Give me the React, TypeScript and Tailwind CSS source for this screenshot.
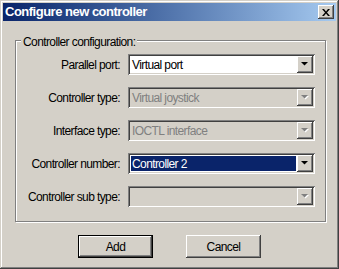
const raised =
  'shadow-[inset_-1px_-1px_#404040,inset_1px_1px_#fff,inset_-2px_-2px_#808080,inset_2px_2px_#d4d0c8]';
const sunken =
  'shadow-[inset_1px_1px_#808080,inset_-1px_-1px_#fff,inset_2px_2px_#404040,inset_-2px_-2px_#d4d0c8]';

function Arrow({ disabled }: { disabled?: boolean }) {
  return (
    <svg width="8" height="5" viewBox="0 0 8 5" className="overflow-visible">
      {disabled && <path d="M1 1h7L4.5 4.5z" fill="#fff" />}
      <path d="M0 0h7L3.5 3.5z" fill={disabled ? '#808080' : '#000'} />
    </svg>
  );
}

function Combo({ value, disabled, selected }: { value?: string; disabled?: boolean; selected?: boolean }) {
  return (
    <div
      className={`flex h-[21px] w-[187px] p-[2px] ${sunken} ${disabled ? 'bg-[#d4d0c8]' : 'bg-white'}`}
    >
      <div className="flex flex-1 items-center p-[1px]">
        <div
          className={`flex h-full flex-1 items-center pl-[1px] ${
            selected ? 'bg-[#0a246a] text-white' : disabled ? 'text-[#808080]' : 'text-black'
          }`}
        >
          {value}
        </div>
      </div>
      <div className={`flex h-[17px] w-[16px] items-center justify-center bg-[#d4d0c8] ${raised}`}>
        <Arrow disabled={disabled} />
      </div>
    </div>
  );
}

function Row({ label, ...rest }: { label: string; value?: string; disabled?: boolean; selected?: boolean }) {
  return (
    <div className="flex items-center gap-[8px]">
      <div className="w-[104px] text-right">{label}</div>
      <Combo {...rest} />
    </div>
  );
}

function Button({ label, isDefault }: { label: string; isDefault?: boolean }) {
  return (
    <div className={`h-[23px] w-[75px] ${isDefault ? 'border border-black' : ''}`}>
      <div className={`flex h-full w-full items-center justify-center bg-[#d4d0c8] ${raised}`}>{label}</div>
    </div>
  );
}

export default function App() {
  return (
    <div
      className={`flex h-[269px] w-[339px] flex-col bg-[#d4d0c8] p-[3px] font-['Liberation_Sans',Arial,sans-serif] text-[12px] tracking-[-0.6px] text-black shadow-[inset_-1px_-1px_#404040,inset_1px_1px_#d4d0c8,inset_-2px_-2px_#808080,inset_2px_2px_#fff]`}
    >
      <div className="flex h-[18px] items-center bg-gradient-to-r from-[#0a246a] to-[#a6caf0] pl-[2px] pr-[2px]">
        <span className="flex-1 text-[13px] font-bold tracking-[-0.5px] text-white">Configure new controller</span>
        <div className={`flex h-[14px] w-[16px] items-center justify-center bg-[#d4d0c8] ${raised}`}>
          <svg width="8" height="7" viewBox="0 0 8 7">
            <path d="M0 0h2l2 2.5L6 0h2L5 3.5 8 7H6L4 4.5 2 7H0l3-3.5z" fill="#000" />
          </svg>
        </div>
      </div>

      <div className="relative ml-[12px] mt-[19px] h-[182px] w-[311px] border border-[#808080] shadow-[inset_1px_1px_#fff,1px_1px_#fff]">
        <span className="absolute -top-[8px] left-[5px] bg-[#d4d0c8] px-[2px]">Controller configuration:</span>
        <div className="flex flex-col gap-[12px] pt-[13px]">
          <Row label="Parallel port:" value="Virtual port" />
          <Row label="Controller type:" value="Virtual joystick" disabled />
          <Row label="Interface type:" value="IOCTL interface" disabled />
          <Row label="Controller number:" value="Controller 2" selected />
          <Row label="Controller sub type:" disabled />
        </div>
      </div>

      <div className="mt-[13px] flex justify-center gap-[33px]">
        <Button label="Add" isDefault />
        <Button label="Cancel" />
      </div>
    </div>
  );
}
